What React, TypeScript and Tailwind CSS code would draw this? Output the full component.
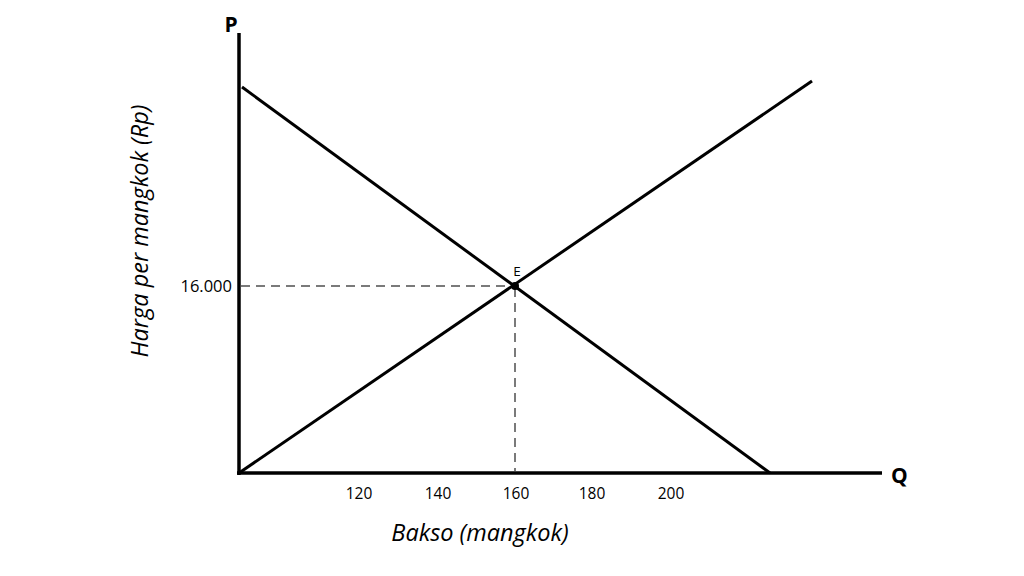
import React from 'react';

const ticks = [
  { label: '120', x: 359 },
  { label: '140', x: 438 },
  { label: '160', x: 516 },
  { label: '180', x: 592 },
  { label: '200', x: 671 },
];

const SupplyDemandChart = () => {
  return (
    <svg width="1024" height="576" viewBox="0 0 1024 576" className="block">
      {/* axes */}
      <line x1="239" y1="33" x2="239" y2="475" stroke="#000" strokeWidth="3.5" />
      <line x1="237" y1="473" x2="882" y2="473" stroke="#000" strokeWidth="3.5" />

      {/* dashed guides */}
      <line x1="241" y1="286" x2="514" y2="286" stroke="#7a7a7a" strokeWidth="2" strokeDasharray="9 6" />
      <line x1="515" y1="288" x2="515" y2="471" stroke="#7a7a7a" strokeWidth="2" strokeDasharray="9 6" />

      {/* demand + supply */}
      <line x1="242" y1="87" x2="770" y2="473" stroke="#000" strokeWidth="3" />
      <line x1="239" y1="473" x2="812" y2="81" stroke="#000" strokeWidth="3" />

      <circle cx="515" cy="286" r="4" fill="#000" />

      <g fontFamily="'Open Sans', 'Noto Sans', sans-serif" fill="#000">
        <text x="231" y="32" fontSize="21" fontWeight="700" textAnchor="middle">P</text>
        <text x="891" y="483" fontSize="21" fontWeight="700">Q</text>
        <text x="517" y="276" fontSize="13.5" textAnchor="middle">E</text>
        <text x="232" y="292" fontSize="16.5" textAnchor="end">16.000</text>
        {ticks.map((t) => (
          <text key={t.label} x={t.x} y="499" fontSize="15.5" textAnchor="middle">
            {t.label}
          </text>
        ))}
        <text x="480" y="541" fontSize="23.5" fontStyle="italic" textAnchor="middle">
          Bakso (mangkok)
        </text>
        <text
          x="0"
          y="0"
          fontSize="23.5"
          fontStyle="italic"
          textAnchor="middle"
          transform="translate(148 231) rotate(-90)"
        >
          Harga per mangkok (Rp)
        </text>
      </g>
    </svg>
  );
};

export default function App() {
  return (
    <div className="w-[1024px] h-[576px] bg-white overflow-hidden">
      <SupplyDemandChart />
    </div>
  );
}
